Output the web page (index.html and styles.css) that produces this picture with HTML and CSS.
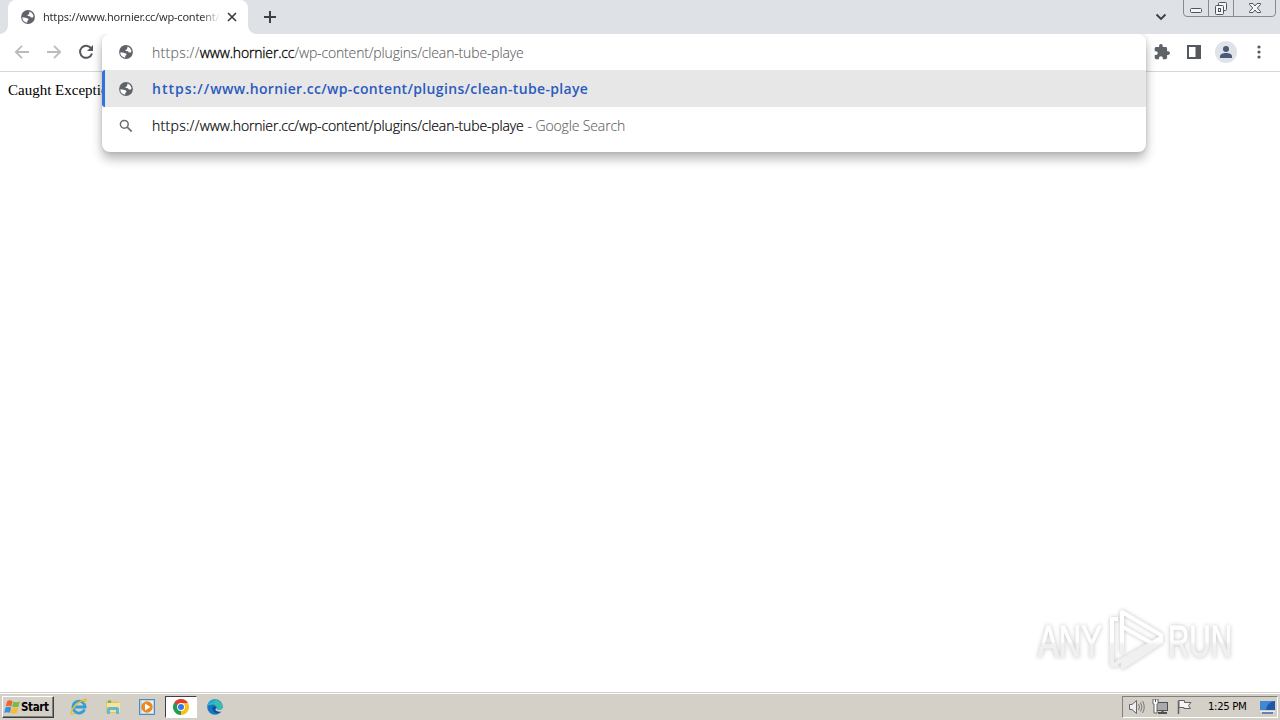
FILE: index.html
```html
<!DOCTYPE html>
<html lang="en">
<head>
<meta charset="utf-8">
<title>https://www.hornier.cc/wp-content/</title>
<link rel="stylesheet" href="styles.css">
</head>
<body>
<svg class="defs" width="0" height="0">
  <symbol id="globe" viewBox="0 0 14 14"><circle cx="7" cy="7" r="6.9" fill="#5f6368"/><path d="M1.4 7.2 4.8 7.700 7.300 8.800 7.500 10 6.300 10.800V12.600C3.1 12.4 1 9.9 1.4 7.2ZM8.600 1.500 11 3.1 12.6 6 11.500 7.700 9.600 7.300 9 6.200 6.800 6.100 6.400 4.900 8 4.200Z" fill="#fff"/></symbol>
</svg>
<div class="window">
  <header class="tabstrip">
    <div class="tab">
      <svg class="tab-globe" width="14" height="14"><use href="#globe"/></svg>
      <span class="tab-title">https://www.hornier.cc/wp-content/</span>
      <svg class="tab-close" width="10" height="10" viewBox="0 0 10 10"><path d="M1 1 9 9M9 1 1 9" stroke="#3c4043" stroke-width="1.7"/></svg>
    </div>
    <svg class="new-tab" width="14" height="14" viewBox="0 0 14 14"><path d="M7 1V13M1 7H13" stroke="#3c4043" stroke-width="2"/></svg>
    <svg class="chevron" width="12" height="8" viewBox="0 0 12 8"><path d="M1.5 1.5 6 6 10.500 1.500" fill="none" stroke="#3c4043" stroke-width="1.9"/></svg>
    <svg class="caption" width="94" height="18" viewBox="0 0 94 18">
      <path d="M.5 0V13Q.5 16.500 4 16.500H89Q92.500 16.500 92.500 13V0M25.500 0V16M50.500 0V16" fill="none" stroke="#858b96"/>
      <g fill="#f4f5f7" stroke="#50545c"><rect x="7.500" y="8.500" width="11" height="4" rx="1"/><rect x="35.500" y="2.500" width="8" height="8" rx="1"/><rect x="32.500" y="5.500" width="8" height="9" rx="1"/><rect x="35.500" y="8.500" width="2" height="3"/><path d="M66.500 3.500H70L72 6 74 3.500H77.500V4.500L74.300 8 77.500 11.500V12.500H74L72 10 70 12.500H66.500V11.500L69.700 8 66.500 4.500Z"/></g>
    </svg>
  </header>
  <nav class="toolbar">
    <svg width="16" height="16" viewBox="0 0 16 16"><path d="M15 8H2M8 1.800 1.800 8 8 14.200" fill="none" stroke="#b9bbbe" stroke-width="1.800"/></svg>
    <svg width="16" height="16" viewBox="0 0 16 16"><path d="M1 8H14M8 1.800 14.200 8 8 14.200" fill="none" stroke="#b9bbbe" stroke-width="1.800"/></svg>
    <svg width="16" height="16" viewBox="0 0 16 16"><path d="M13.200 4.300A6.100 6.100 0 1 0 14 9.500" fill="none" stroke="#55585d" stroke-width="2"/><path d="M15 1V7H9Z" fill="#55585d"/></svg>
    <div class="actions">
      <svg width="16" height="16" viewBox="1 1 22 22"><path fill="#5f6368" d="M20.500 11H19V7c0-1.100-.9-2-2-2h-4V3.500a2.500 2.500 0 0 0-5 0V5H4c-1.100 0-2 .9-2 2v3.800h1.500a2.700 2.700 0 0 1 0 5.400H2V20c0 1.100.9 2 2 2h3.800v-1.500a2.700 2.700 0 0 1 5.400 0V22H17c1.100 0 2-.9 2-2v-4h1.500a2.500 2.500 0 0 0 0-5z"/></svg>
      <svg width="14" height="14" viewBox="0 0 14 14"><rect x="1" y="1" width="12" height="12" fill="none" stroke="#55585d" stroke-width="2"/><path d="M8.500 1H13V13H8.500Z" fill="#55585d"/></svg>
      <svg width="22" height="22" viewBox="0 0 22 22"><circle cx="11" cy="11" r="11" fill="#dfe3e9"/><circle cx="11" cy="8" r="3" fill="#4b5876"/><path d="M5 17V15.500C5 13 8 12 11 12S17 13 17 15.500V17Z" fill="#4b5876"/></svg>
      <svg width="4" height="14" viewBox="0 0 4 14"><g fill="#55585d"><circle cx="2" cy="2" r="1.600"/><circle cx="2" cy="7" r="1.600"/><circle cx="2" cy="12" r="1.600"/></g></svg>
    </div>
  </nav>
  <main class="page">Caught Exception</main>
  <footer class="taskbar">
    <div class="start">
      <svg width="17" height="17" viewBox="0 0 16 16"><path d="M3 2Q5.500.5 8 2L7 7Q4.500 5.800 1.600 7Z" fill="#ee652d"/><path d="M8.700 2.300Q12 3.800 15 2L13.700 7Q11 8.500 7.700 7.200Z" fill="#80b842"/><path d="M1.400 8Q4.200 6.800 6.800 8L5.600 13Q3 11.800.2 13Z" fill="#3e91d7"/><path d="M7.500 8.200Q10.500 9.500 13.500 8L12.200 13Q9.500 14.600 6.300 13.200Z" fill="#f8be32"/></svg>
      <span>Start</span>
    </div>
    <div class="launchers">
      <div class="launcher"><svg width="18" height="18" viewBox="0 0 18 18"><path d="M14.500 11.500A6 6 0 1 1 15 9H5" fill="none" stroke="#319fd7" stroke-width="2.800"/><path d="M14 5Q18.500-.5 13.500 2 5 5.500 1.500 13-.5 18.500 5 15" fill="none" stroke="#e9bd35" stroke-width="1.400"/></svg></div>
      <div class="launcher"><svg width="18" height="18" viewBox="0 0 18 18"><path d="M2 3 7 2 8 3.500H15V15H2Z" fill="#e8c25b"/><path d="M3 5H16V14H3Z" fill="#f7e49b"/><path d="M4 2.500H7V5H4Z" fill="#69b36a"/><path d="M3 16V11Q3 9 5 9H13Q15 9 15 11V16H12V12H6V16Z" fill="#62b8d4"/></svg></div>
      <div class="launcher"><svg width="18" height="18" viewBox="0 0 18 18"><rect x="1.500" y="1.500" width="15" height="15" fill="#b7d5ea" stroke="#4d8cba"/><rect x="4" y="3" width="11" height="12" fill="#e9f1f4"/><circle cx="9" cy="9" r="5.700" fill="#ef861e"/><path d="M7 5.500 12.500 9 7 12.500Z" fill="#fff"/></svg></div>
      <div class="launcher active"><svg width="16" height="16" viewBox="0 0 16 16"><path d="M8 8 1.070 4A8 8 0 0 1 14.930 4Z" fill="#e33b2e"/><path d="M8 8 14.930 4A8 8 0 0 1 8 16Z" fill="#fbc116"/><path d="M8 8V16A8 8 0 0 1 1.070 4Z" fill="#239b50"/><path d="M8 4H14.930L11.500 10Z" fill="#fbc116"/><path d="M1.070 4H8V8Z" fill="#e33b2e"/><path d="M1.070 4 4.540 10 8 8Z" fill="#239b50"/><circle cx="8" cy="8" r="3.900" fill="#fff"/><circle cx="8" cy="8" r="3" fill="#3478e5"/></svg></div>
      <div class="launcher"><svg width="16" height="16" viewBox="0 0 16 16"><circle cx="8" cy="8" r="7.800" fill="#1777c4"/><path d="M.4 7A7.800 7.800 0 0 1 15.800 8Q15.500 11 11.500 10.800 9 10.500 9.500 8.500 9 5.500 5.500 5.500 2 5.500.4 7Z" fill="#36bfae"/><path d="M.3 7C1 2 5 0 9 .3 7 2 7 4 7 4 3 3.500.8 6 .3 7Z" fill="#27a6da"/><path d="M5.500 7.500Q4.500 11 8 13.500 11 15 14.200 12.500 11 13.200 9.500 12 7.500 10.500 9.300 9.500L9.500 8Z" fill="#0d4d9c"/><path d="M9.500 8.500Q9 10.500 11.500 10.900 14.500 11 16 9V11L14.500 12.600Q9 13 8.400 10.500Z" fill="#d4d0c8"/></svg></div>
    </div>
    <div class="tray">
      <svg width="17" height="16" viewBox="0 0 17 16"><path d="M1.500 5.500H4L8.500 1.500V14.500L4 10.500H1.500Z" fill="#eee" stroke="#66686a"/><path d="M10.500 5Q12.500 8 10.500 11M12.500 3.500Q15.500 8 12.500 12.500M14.500 2Q18 8 14.500 14" fill="none" stroke="#77797b"/></svg>
      <svg width="17" height="16" viewBox="0 0 17 16"><rect x="4.500" y="3.500" width="11" height="8" fill="#a9aaab" stroke="#4e5052"/><path d="M6 14H15M10.500 12V14" stroke="#4e5052" stroke-width="2"/><path d="M1 0H6V5H5V14H2V5H1Z" fill="#fff" stroke="#666"/><path d="M3.500 0V3" stroke="#555"/></svg>
      <svg width="17" height="16" viewBox="0 0 17 16"><path d="M2.500 15V1.500" stroke="#606265" stroke-width="1.500"/><path d="M3 1.500H8.500V3.500H15L12.500 6.500 14.500 9.500H8V8.500H3Z" fill="#f4f4f4" stroke="#606265"/></svg>
      <span class="clock">1:25 PM</span>
      <svg class="desktop" width="17" height="14" viewBox="0 0 17 14"><path d="M1 1H16V10H1Z" fill="#1f58a8"/><path d="M1 1H16Q8 2 7 10H1Z" fill="#4187d2"/><path d="M1 11.500H16" stroke="#e5edf4"/><path d="M3 13H14" stroke="#416d9e" stroke-width="1.500"/></svg>
    </div>
  </footer>
</div>
<section class="omnibox">
  <div class="row"><svg width="14" height="14"><use href="#globe"/></svg><span class="url muted"><span class="scheme">https://</span><b>www.hornier.cc</b>/wp-content/plugins/clean-tube-playe</span></div>
  <div class="row selected"><svg width="14" height="14"><use href="#globe"/></svg><span class="url match"><span class="scheme">https://</span>www.hornier.cc/wp-content/plugins/clean-tube-playe</span></div>
  <div class="row last"><svg width="14" height="14" viewBox="0 0 14 14"><circle cx="5.300" cy="5.300" r="3.900" fill="none" stroke="#6b6e72" stroke-width="1.500"/><path d="M8.200 8.200 12.700 12.700" stroke="#6b6e72" stroke-width="1.700"/></svg><span class="url"><span class="scheme">https://</span>www.hornier.cc/wp-content/plugins/clean-tube-playe</span><span class="engine">- Google Search</span></div>
</section>
<div class="watermark">
  <svg width="220" height="76" viewBox="0 0 220 76">
    <defs><linearGradient id="fade" gradientUnits="userSpaceOnUse" x1="0" y1="34" x2="0" y2="38"><stop offset="0" stop-color="#fff"/><stop offset="1" stop-color="#f0f0f0"/></linearGradient></defs>
    <g class="wm-text"><text x="8" y="50" textLength="64" lengthAdjust="spacingAndGlyphs">ANY</text><text x="138" y="50" textLength="64" lengthAdjust="spacingAndGlyphs">RUN</text></g>
    <g fill="none" stroke="url(#fade)" stroke-width="4" stroke-linejoin="round"><path d="M92 46V5L131 28V31"/><path d="M88 12H82V58H88"/><path d="M93 20 125 38"/><path d="M85 57 131 31V35L93 60V55L126 38"/></g>
  </svg>
</div>
</body>
</html>
```
FILE: styles.css
```css
* { box-sizing: border-box; }
body { margin: 0; width: 1280px; height: 720px; overflow: hidden; position: relative; background: #fff; font-family: "Open Sans", "Noto Sans", sans-serif; }
svg { display: block; flex: none; }
.defs { position: absolute; }
.window { height: 720px; display: flex; flex-direction: column; }
.tabstrip { height: 34px; flex: none; background: #dee1e6; display: flex; align-items: flex-start; padding-left: 8px; }
.tab { position: relative; width: 240px; height: 34px; background: #fff; border-radius: 8px 8px 0 0; display: flex; align-items: center; padding: 0 11px 0 13px; }
.tab::before, .tab::after { content: ""; position: absolute; bottom: 0; width: 8px; height: 8px; }
.tab::before { left: -8px; background: radial-gradient(circle at 0 0, transparent 7.5px, #fff 8px); }
.tab::after { right: -8px; background: radial-gradient(circle at 100% 0, transparent 7.5px, #fff 8px); }
.tab-title { margin-left: 8px; width: 177px; overflow: hidden; white-space: nowrap; font: 11px/18px "Noto Sans", sans-serif; letter-spacing: -.2px; color: #333; -webkit-mask-image: linear-gradient(90deg, #000 158px, transparent 177px); }
.tab-close { margin-left: 7px; }
.new-tab { margin: 10px 0 0 15px; }
.chevron { margin: 13px 0 0 auto; }
.caption { margin: 0 3px 0 16px; }
.toolbar { height: 38px; flex: none; border-bottom: 1px solid #d4d6d9; background: #fff; display: flex; align-items: center; gap: 16px; padding: 0 19px 1px 14px; }
.actions { margin-left: auto; display: flex; align-items: center; }
.actions svg:nth-child(2) { margin-left: 17px; }
.actions svg:nth-child(3) { margin-left: 14px; }
.actions svg:nth-child(4) { margin-left: 20px; }
.page { flex: 1; padding: 9px 8px; font: 15px/18px "Liberation Serif", serif; color: #000; }
.taskbar { height: 28px; flex: none; background: #d4d0c8; border-top: 1px solid #d4d0c8; box-shadow: inset 0 1px #fff; display: flex; align-items: flex-start; padding: 3px 2px 1px 2px; }
.start { width: 52px; height: 22px; border: 1px solid; border-color: #fff #404040 #404040 #fff; box-shadow: inset -1px -1px #808080; display: flex; align-items: center; gap: 0; padding-left: 1px; font: bold 11.5px/18px "DejaVu Sans Condensed", "DejaVu Sans", sans-serif; letter-spacing: -.35px; color: #000; }
.launchers { display: flex; margin-left: 9px; gap: 2px; }
.launcher { width: 32px; height: 22px; display: flex; align-items: center; justify-content: center; }
.active { background: #fff; border: 1px solid; border-color: #404040 #fff #fff #404040; }
.tray { margin-left: auto; width: 156px; height: 22px; border: 1px solid; border-color: #808080 #fff #fff #808080; display: flex; align-items: center; gap: 7px; padding-left: 5px; }
.clock { margin-left: 8px; width: 41px; white-space: nowrap; font: 11.3px/18px "DejaVu Sans Condensed", "DejaVu Sans", sans-serif; letter-spacing: -.35px; color: #000; }
.desktop { margin-left: 3px; }
.omnibox { position: absolute; left: 102px; top: 34px; width: 1044px; height: 118px; border-radius: 8px; background: #fff; box-shadow: 0 7px 11px rgba(0,0,0,.28), 0 0 5px rgba(0,0,0,.12); clip-path: inset(0 -20px -30px -20px); }
.row { height: 36px; display: flex; align-items: center; padding-left: 17px; white-space: nowrap; font-size: 14px; line-height: 20px; }
.url { margin-left: 19px; font-weight: 300; letter-spacing: -.16px; color: #000; -webkit-text-stroke: .2px currentColor; }
.scheme { letter-spacing: .3px; }
.url b { font-weight: 300; color: #000; -webkit-text-stroke: .3px #000; }
.muted { color: #606060; -webkit-text-stroke: .1px currentColor; padding-top: 2px; }
.selected { height: 37px; padding-left: 14px; background: #e7e7e7; border-left: 3px solid #2f72df; border-radius: 3px 0 0 3px; }
.match { font-weight: 600; color: #2c5bbd; letter-spacing: .34px; -webkit-text-stroke: 0; }
.match .scheme { letter-spacing: 1px; }
.last { height: 37px; }
.engine { margin-left: 4px; color: #606060; font-weight: 300; letter-spacing: -.13px; -webkit-text-stroke: .1px currentColor; }
.watermark { position: absolute; left: 1030px; top: 607px; filter: drop-shadow(0 0 2px rgba(0,0,0,.24)); }
.wm-text { font: 44px "Liberation Sans Narrow", "Liberation Sans", sans-serif; fill: url(#fade); stroke: url(#fade); stroke-width: 1px; }
```
